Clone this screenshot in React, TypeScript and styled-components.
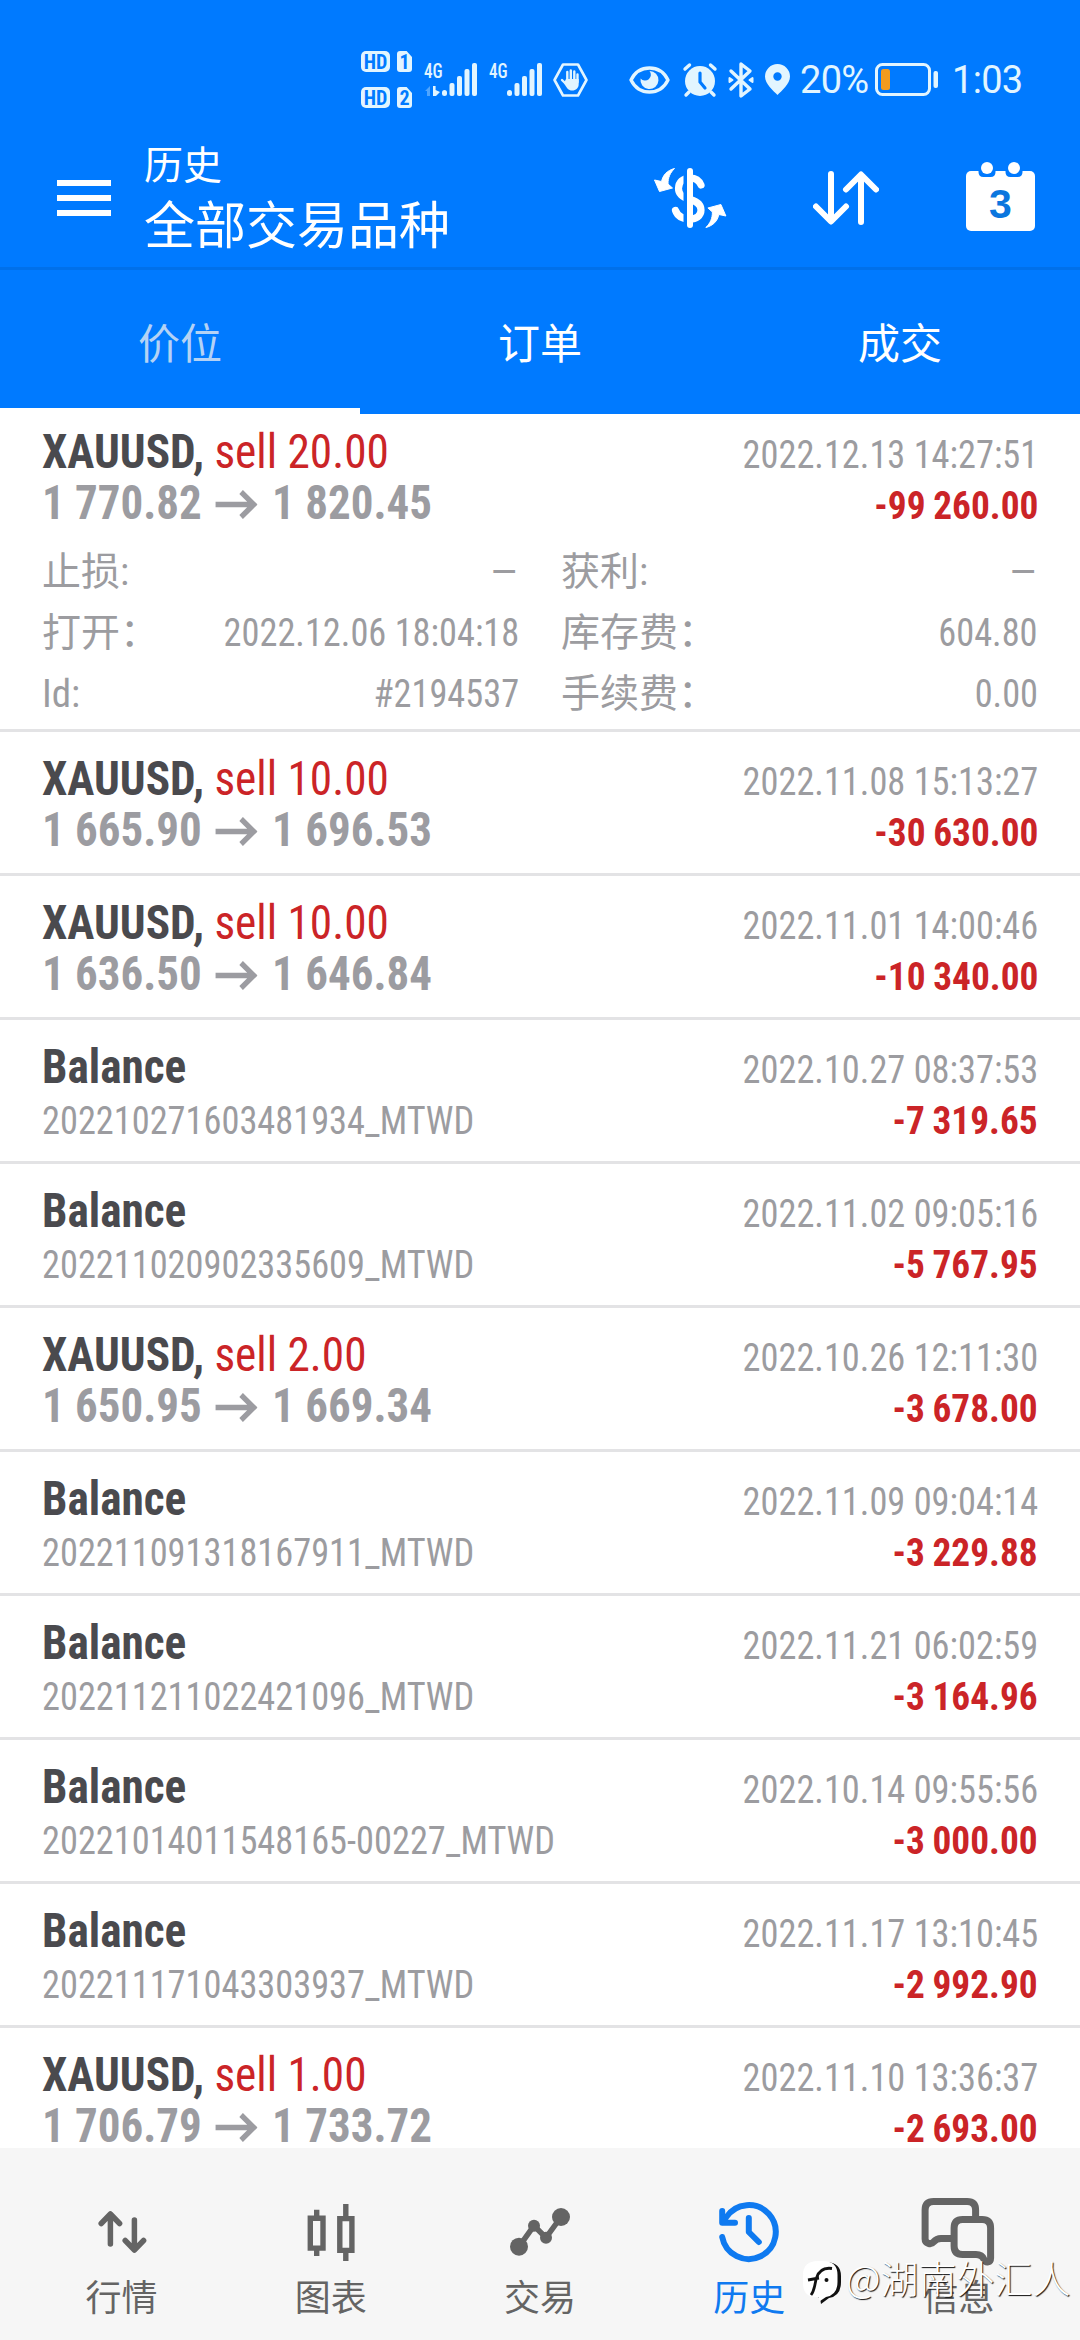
import React from 'react';
import styled, { createGlobalStyle } from 'styled-components';

const BLUE = '#007aff';
const RED = '#cb2427';
const STATUS = '#e2f5ff';
const LATIN = `"Roboto Condensed", Roboto, "Noto Sans CJK SC", sans-serif`;
const CJK = `"Noto Sans CJK SC", sans-serif`;

const GlobalStyle = createGlobalStyle`
  html, body { margin: 0; padding: 0; background: #fff; }
  * { box-sizing: border-box; }
`;

const Screen = styled.div`
  position: relative;
  width: 1080px;
  height: 2340px;
  display: flex;
  flex-direction: column;
  overflow: hidden;
  background: #fff;
  font-family: ${LATIN};
`;

/* ---------- status bar ---------- */

const StatusBar = styled.div`
  height: 120px;
  flex: none;
  display: flex;
  align-items: center;
  padding: 39px 0 0 361px;
  background: ${BLUE};
  color: ${STATUS};
`;

const SimStack = styled.div`
  display: flex;
  flex-direction: column;
  gap: 15px;
`;

const SimLine = styled.div`
  display: flex;
  gap: 7px;
`;

const Badge = styled.span<{ $w: number; $cut?: boolean }>`
  width: ${(p) => p.$w}px;
  height: 21px;
  border-radius: ${(p) => (p.$cut ? 3 : 5)}px;
  background: ${STATUS};
  color: ${BLUE};
  font: 700 20px/22px ${LATIN};
  text-align: center;
  ${(p) => p.$cut && 'clip-path: polygon(0 0, 64% 0, 100% 28%, 100% 100%, 0 100%);'}
`;

const Network = styled.div<{ $ml: number }>`
  display: flex;
  margin-left: ${(p) => p.$ml}px;
  width: 53px;
  height: 33px;
`;

const NetworkLabel = styled.span`
  width: 18px;
  font: 500 20px/16px ${LATIN};
  transform: scaleX(0.86);
  transform-origin: left;
`;

const StatusIcon = styled.svg<{ $ml: number }>`
  flex: none;
  margin-left: ${(p) => p.$ml}px;
  overflow: visible;
`;

const StatusText = styled.span<{ $ml: number; $w: number }>`
  margin-left: ${(p) => p.$ml}px;
  width: ${(p) => p.$w}px;
  font: 400 38px/40px Roboto, sans-serif;
  letter-spacing: -0.7px;
  white-space: nowrap;
`;

const Signal = ({ roaming }: { roaming?: boolean }) => (
  <svg width="35" height="33" viewBox="0 0 35 33" overflow="visible" fill={STATUS}>
    {roaming && <path d="M-17 28l5-5v10h-3v-5z" opacity=".35" />}
    {roaming && <path d="M-9 23h2.6v4l4.4 2-4 4h-3z" />}
    <rect x="0" y="27" width="5" height="6" rx="2.5" />
    <rect x="7.5" y="20" width="5" height="13" rx="2" />
    <rect x="15" y="13" width="5" height="20" rx="2" />
    <rect x="22.5" y="6" width="5" height="27" rx="2" />
    <rect x="30" y="0" width="5" height="33" rx="2" />
  </svg>
);

/* ---------- app bar ---------- */

const AppBar = styled.header`
  height: 150px;
  flex: none;
  display: flex;
  align-items: center;
  padding: 9px 45px 0 57px;
  background: ${BLUE};
  border-bottom: 3px solid #0070ea;
`;

const MenuButton = styled.div`
  width: 54px;
  display: grid;
  gap: 9px;
  margin-right: 33px;
`;

const MenuLine = styled.i`
  height: 6px;
  background: #fff;
`;

const TitleBlock = styled.div`
  flex: 1;
  padding-bottom: 3px;
  color: #fff;
  font-family: ${CJK};
`;

const Subtitle = styled.div`
  font-size: 39px;
  line-height: 52px;
`;

const Title = styled.div`
  font-size: 51px;
  line-height: 69px;
`;

const Actions = styled.div`
  display: flex;
  align-items: center;
  gap: 87px;
`;

const Calendar = styled.div`
  position: relative;
  width: 69px;
  height: 69px;
  margin-bottom: 3px;
`;

const CalendarDay = styled.span`
  position: absolute;
  inset: 18px 0 0;
  text-align: center;
  font: 700 41px/49px "Liberation Sans", Arial, sans-serif;
  color: #0b76de;
`;

/* ---------- tabs ---------- */

const Tabs = styled.nav`
  height: 144px;
  flex: none;
  display: grid;
  grid-template-columns: repeat(3, 1fr);
  background: ${BLUE};
`;

const Tab = styled.div<{ $selected?: boolean }>`
  padding-top: 3px;
  border-bottom: 6px solid ${(p) => (p.$selected ? '#fff' : BLUE)};
  text-align: center;
  font-family: ${CJK};
  font-size: 42px;
  line-height: 135px;
  color: ${(p) => (p.$selected ? '#b4d2f5' : '#fff')};
`;

/* ---------- history list ---------- */

const List = styled.main`
  flex: 1;
  min-height: 0;
  overflow: hidden;
`;

const Row = styled.section<{ $expanded?: boolean }>`
  height: ${(p) => (p.$expanded ? 318 : 144)}px;
  padding: ${(p) => (p.$expanded ? 12 : 21)}px 42px 0;
  border-bottom: 3px solid #e3e3e5;
`;

const Line = styled.div`
  height: 51px;
  display: flex;
  align-items: baseline;
  white-space: nowrap;

  &::before {
    content: '\\200b';
    font-size: 48px;
    line-height: 51px;
  }
`;

const Name = styled.span`
  font-size: 48px;
  line-height: 51px;
  font-weight: 700;
  color: #4a4a4e;
  transform: scaleX(0.943);
  transform-origin: left;
`;

const Volume = styled.span`
  font-weight: 400;
  color: ${RED};
`;

const Prices = styled.span`
  display: flex;
  align-items: baseline;
  font-size: 48px;
  line-height: 51px;
  font-weight: 700;
  color: #9c9ca1;
  transform: scaleX(0.937);
  transform-origin: left;
`;

const PriceArrow = styled.svg`
  margin: 0 15.5px 0 14px;
`;

const Small = styled.span<{ $end?: boolean }>`
  font-size: 39px;
  line-height: 51px;
  color: #9c9ca0;
  margin-left: ${(p) => (p.$end ? 'auto' : 0)};
  transform: scaleX(0.932);
  transform-origin: ${(p) => (p.$end ? 'right' : 'left')};
`;

const Amount = styled.span`
  margin-left: auto;
  font-size: 39px;
  line-height: 51px;
  font-weight: 700;
  word-spacing: -1px;
  color: ${RED};
  transform: scaleX(0.957);
  transform-origin: right;
`;

const Details = styled.div`
  display: grid;
  grid-template-columns: 1fr 1fr;
  column-gap: 42px;
  padding-top: 14px;
`;

const Detail = styled.div`
  height: 61px;
  display: flex;
  justify-content: space-between;
  font-size: 39px;
  line-height: 61px;
  font-weight: 400;
  color: #9c9ca0;
`;

const DetailValue = styled.span<{ $dash?: boolean }>`
  transform: scaleX(${(p) => (p.$dash ? 1.35 : 0.932)});
  transform-origin: right;
`;

/* ---------- bottom navigation ---------- */

const BottomNav = styled.nav`
  height: 192px;
  flex: none;
  display: grid;
  grid-template-columns: repeat(5, 1fr);
  padding: 48px 17px 0;
  background: #f6f6f6;
`;

const NavItem = styled.div<{ $active?: boolean }>`
  display: flex;
  flex-direction: column;
  align-items: center;
  gap: 1px;
  color: ${(p) => (p.$active ? '#0f7af0' : '#646464')};
`;

const NavIcon = styled.svg<{ $square?: boolean }>`
  width: 72px;
  height: 72px;
  overflow: visible;
  fill: none;
  stroke: currentColor;
  stroke-linecap: ${(p) => (p.$square ? 'butt' : 'round')};
  stroke-linejoin: ${(p) => (p.$square ? 'miter' : 'round')};
`;

const NavLabel = styled.span`
  font-family: ${CJK};
  font-size: 36px;
  line-height: 52px;
`;

const Watermark = styled.div`
  position: absolute;
  left: 801px;
  top: 2250px;
  height: 54px;
  display: flex;
  align-items: center;
  gap: 3px;
  font: 300 38px/54px ${CJK};
  color: #fff;
  text-shadow: 1px 1px 1px #111;
  white-space: nowrap;
`;

type Entry = {
  volume?: string;
  from?: string;
  to?: string;
  comment?: string;
  time: string;
  amount: string;
  details?: [string, string][];
};

const entries: Entry[] = [
  {
    volume: '20.00', from: '1 770.82', to: '1 820.45', time: '2022.12.13 14:27:51', amount: '-99 260.00',
    details: [
      ['止损:', '–'], ['获利:', '–'],
      ['打开：', '2022.12.06 18:04:18'], ['库存费：', '604.80'],
      ['Id:', '#2194537'], ['手续费：', '0.00'],
    ],
  },
  { volume: '10.00', from: '1 665.90', to: '1 696.53', time: '2022.11.08 15:13:27', amount: '-30 630.00' },
  { volume: '10.00', from: '1 636.50', to: '1 646.84', time: '2022.11.01 14:00:46', amount: '-10 340.00' },
  { comment: '202210271603481934_MTWD', time: '2022.10.27 08:37:53', amount: '-7 319.65' },
  { comment: '202211020902335609_MTWD', time: '2022.11.02 09:05:16', amount: '-5 767.95' },
  { volume: '2.00', from: '1 650.95', to: '1 669.34', time: '2022.10.26 12:11:30', amount: '-3 678.00' },
  { comment: '202211091318167911_MTWD', time: '2022.11.09 09:04:14', amount: '-3 229.88' },
  { comment: '202211211022421096_MTWD', time: '2022.11.21 06:02:59', amount: '-3 164.96' },
  { comment: '20221014011548165-00227_MTWD', time: '2022.10.14 09:55:56', amount: '-3 000.00' },
  { comment: '202211171043303937_MTWD', time: '2022.11.17 13:10:45', amount: '-2 992.90' },
  { volume: '1.00', from: '1 706.79', to: '1 733.72', time: '2022.11.10 13:36:37', amount: '-2 693.00' },
];

const EntryRow = ({ entry }: { entry: Entry }) => (
  <Row $expanded={!!entry.details}>
    <Line>
      <Name>
        {entry.volume ? <>XAUUSD, <Volume>sell {entry.volume}</Volume></> : 'Balance'}
      </Name>
      <Small $end>{entry.time}</Small>
    </Line>
    <Line>
      {entry.comment ? (
        <Small>{entry.comment}</Small>
      ) : (
        <Prices>
          {entry.from}
          <PriceArrow width="45.5" height="29" viewBox="0 0 45.5 29" fill="none" stroke="#9c9ca1" strokeWidth="5.6">
            <path d="M0 14.5H41M27.5 2l13.5 12.5L27.5 27" />
          </PriceArrow>
          {entry.to}
        </Prices>
      )}
      <Amount>{entry.amount}</Amount>
    </Line>
    {entry.details && (
      <Details>
        {entry.details.map(([label, value]) => (
          <Detail key={label}>
            <span>{label}</span>
            <DetailValue $dash={value === '–'}>{value}</DetailValue>
          </Detail>
        ))}
      </Details>
    )}
  </Row>
);

const CURVED_ARROW = 'M20.5 .5C13 2.5 9 7 7.5 13.5L.5 12L5.5 23.5L18.5 20L14 16C14 9.5 16 5 20.5 .5z';

const MoneyIcon = () => (
  <svg width="72" height="60" viewBox="0 0 72 60" overflow="visible" fill="none">
    <path
      d="M47 17C45 12 41 10 36 10C29 10 24.5 14.5 24.5 20.5C24.5 27 29 29.5 36 31.5C43.5 33.5 47 37 47 42C47 48 42 51 36 51C28 51 23.5 48 21.5 42.5"
      stroke="#fff" strokeWidth="7.2" strokeLinecap="round"
    />
    <path d="M31.5 0V60" stroke={BLUE} strokeWidth="4" />
    <path d="M36 3V57" stroke="#fff" strokeWidth="6" strokeLinecap="round" />
    <g fill="#fff" stroke="#fff" strokeLinejoin="round">
      <path d={CURVED_ARROW} />
      <path d={CURVED_ARROW} transform="rotate(180 36.2 30)" />
    </g>
  </svg>
);

const SortIcon = () => (
  <svg width="66" height="54" viewBox="0 0 66 54" fill="none" stroke="#fff" strokeWidth="6" strokeLinecap="round" strokeLinejoin="round">
    <path d="M18 3V50M3 35.5L18 50.5L33 35.5" />
    <path d="M48 51V4M33 18.5L48 3.5L63 18.5" />
  </svg>
);

export default function App() {
  return (
    <>
      <GlobalStyle />
      <Screen>
        <StatusBar>
          <SimStack>
            <SimLine><Badge $w={29}>HD</Badge><Badge $w={15} $cut>1</Badge></SimLine>
            <SimLine><Badge $w={29}>HD</Badge><Badge $w={15} $cut>2</Badge></SimLine>
          </SimStack>
          <Network $ml={12}><NetworkLabel>4G</NetworkLabel><Signal roaming /></Network>
          <Network $ml={12}><NetworkLabel>4G</NetworkLabel><Signal /></Network>
          <StatusIcon $ml={11} width="35" height="34" viewBox="0 0 35 34">
            <path d="M10 1.5H25L33.5 17L25 32.5H10L1.5 17z" fill="none" stroke={STATUS} strokeWidth="2.6" strokeLinejoin="round" />
            <path d="M9 17L13 21M14.3 9V18M17.8 7.5V18M21.3 8.5V18M24.5 11.5V19" stroke={STATUS} strokeWidth="2.4" strokeLinecap="round" />
            <path d="M13 16H25.7V21C25.7 25 23 27.500 19 27.500C15.500 27.500 13.500 25 11 20z" fill={STATUS} />
          </StatusIcon>
          <StatusIcon $ml={41} width="41" height="28" viewBox="0 0 41 28">
            <path d="M2 14C10 -2 31 -2 39 14C31 30 10 30 2 14z" fill="none" stroke={STATUS} strokeWidth="3.4" strokeLinejoin="round" />
            <path d="M20.5 5A9 9 0 1 1 11.6 12.5A5.800 5.800 0 0 0 20.5 5z" fill={STATUS} />
          </StatusIcon>
          <StatusIcon $ml={13} width="34" height="34" viewBox="0 0 34 34" fill="none" stroke={STATUS} strokeLinecap="round">
            <circle cx="17" cy="18" r="15" fill={STATUS} stroke="none" />
            <path d="M2 6L6.5 2M32 6L27.5 2M6 29L3 32M28 29L31 32" strokeWidth="3.4" />
            <path d="M17 10V19L22 25" stroke={BLUE} strokeWidth="3.2" />
          </StatusIcon>
          <StatusIcon $ml={11} width="26" height="36" viewBox="0 0 26 36" fill="none" stroke={STATUS} strokeWidth="3.4" strokeLinejoin="round" strokeLinecap="round">
            <path d="M3 9L22 27L13 34V2L22 9L3 27" />
            <path d="M1.5 16V20L4.5 18zM24.5 16V20L21.5 18z" strokeWidth="2" fill={STATUS} />
          </StatusIcon>
          <StatusIcon $ml={11} width="25" height="31" viewBox="0 0 25 31">
            <path fillRule="evenodd" fill={STATUS} d="M12.5 0A12.5 12.5 0 0 1 25 12.5C25 20 16.5 27 12.5 31C8.5 27 0 20 0 12.5A12.5 12.5 0 0 1 12.5 0zM12.5 8.3a4.2 4.2 0 1 0 0 8.4a4.2 4.2 0 1 0 0-8.4z" />
          </StatusIcon>
          <StatusText $ml={10} $w={75}>20%</StatusText>
          <StatusIcon $ml={0} width="63" height="33" viewBox="0 0 63 33">
            <rect x="1.5" y="1.5" width="53" height="30" rx="6" fill="none" stroke={STATUS} strokeWidth="3" />
            <rect x="6" y="6" width="9" height="21" rx="2.5" fill="#f39b1d" />
            <rect x="58.5" y="8" width="4.5" height="17" rx="2" fill={STATUS} />
          </StatusIcon>
          <StatusText $ml={14} $w={70}>1:03</StatusText>
        </StatusBar>

        <AppBar>
          <MenuButton><MenuLine /><MenuLine /><MenuLine /></MenuButton>
          <TitleBlock>
            <Subtitle>历史</Subtitle>
            <Title>全部交易品种</Title>
          </TitleBlock>
          <Actions>
            <MoneyIcon />
            <SortIcon />
            <Calendar>
              <svg width="69" height="69" viewBox="0 0 69 69">
                <rect y="9" width="69" height="60" rx="5" fill="#fff" />
                <path d="M12.5 0H29.5V10Q29.5 15 24.5 15H17.5Q12.5 15 12.5 10zM39.5 0H56.5V10Q56.5 15 51.5 15H44.5Q39.5 15 39.5 10z" fill={BLUE} />
                <circle cx="21" cy="6" r="6" fill="#fff" />
                <circle cx="48" cy="6" r="6" fill="#fff" />
              </svg>
              <CalendarDay>3</CalendarDay>
            </Calendar>
          </Actions>
        </AppBar>

        <Tabs>
          <Tab $selected>价位</Tab>
          <Tab>订单</Tab>
          <Tab>成交</Tab>
        </Tabs>

        <List>
          {entries.map((entry) => <EntryRow key={entry.time} entry={entry} />)}
        </List>

        <BottomNav>
          <NavItem>
            <NavIcon viewBox="0 0 72 72" strokeWidth="5.5">
              <path d="M24.4 48V18.5M15.2 27.5L24.4 18L33.6 27.5M48.4 24V53.5M39.2 44.5L48.4 54L57.6 44.5" />
            </NavIcon>
            <NavLabel>行情</NavLabel>
          </NavItem>
          <NavItem>
            <NavIcon $square viewBox="0 0 72 72" strokeWidth="5.4">
              <path d="M15.3 22.3h12.7v29.8H15.3zM21.7 13.7V21M21.7 53V60M44.8 22.6h12.1v31.8H44.8zM50.8 8V21M50.8 56V65" />
            </NavIcon>
            <NavLabel>图表</NavLabel>
          </NavItem>
          <NavItem>
            <NavIcon viewBox="0 0 72 72" strokeWidth="5.5">
              <path d="M15 50.7L30 29.7L42 41.7L57 21" />
              <g fill="currentColor" stroke="none">
                <circle cx="15" cy="50.7" r="9" /><circle cx="30" cy="29.7" r="6" />
                <circle cx="42" cy="41.7" r="6" /><circle cx="57" cy="21" r="9" />
              </g>
            </NavIcon>
            <NavLabel>交易</NavLabel>
          </NavItem>
          <NavItem $active>
            <NavIcon viewBox="0 0 72 72" strokeWidth="6">
              <path d="M9.2 41A27 27 0 1 0 13 21.5" />
              <path d="M9.2 15V26.7H22" />
              <path d="M9.2 19L16 26H9.2z" fill="currentColor" strokeWidth="2" />
              <path d="M35.8 22V36L45.800 46" />
            </NavIcon>
            <NavLabel>历史</NavLabel>
          </NavItem>
          <NavItem>
            <NavIcon $square viewBox="0 0 72 72" strokeWidth="7">
              <path d="M53.600 20V14Q53.600 5.500 45.100 5.500H11.600Q3.100 5.500 3.100 14V43C3.100 47.500 9 49 11.500 46Q14.500 42.500 19 42.500H30" />
              <path d="M40.600 23.500H60.100Q68.600 23.500 68.600 32V62C68.600 66.500 64 67.500 62 63.500Q60 58.500 54 58.500H40.600Q32.100 58.500 32.100 50V32Q32.100 23.500 40.600 23.500z" />
            </NavIcon>
            <NavLabel>信息</NavLabel>
          </NavItem>
        </BottomNav>

        <Watermark>
          <svg width="42" height="46" viewBox="0 0 42 46" overflow="visible">
            <path d="M17 8H26Q40 9 40 22V28Q40 42 28 44L20 50L19 44H17z" fill="#111" />
            <path d="M17 7H22Q36.500 7 36.500 21V28Q36.500 41 25 43L19 47L17 43H15Q2 43 2 29V21Q2 7 17 7z" fill="#fff" />
            <path d="M10 41C14 36 13.500 30 15.500 24C18 16 24 13.500 31 14.500M7 26L18 24" stroke="#111" strokeWidth="2.800" fill="none" />
            <circle cx="25.500" cy="26" r="2" fill="#111" />
          </svg>
          @湖南外汇人
        </Watermark>
      </Screen>
    </>
  );
}
